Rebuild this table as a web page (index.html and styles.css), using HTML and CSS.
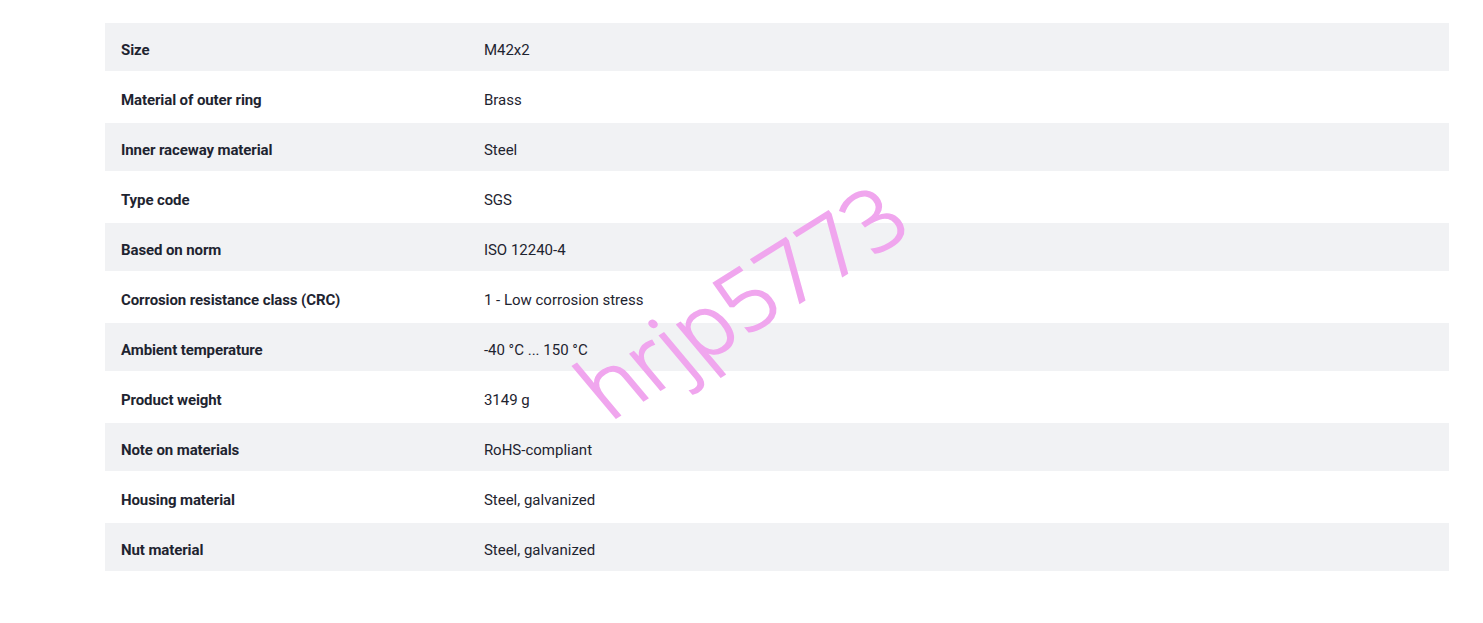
FILE: index.html
```html
<!doctype html>
<html lang="en">
<head>
  <meta charset="UTF-8">
  <title>Product details</title>
  <link rel="stylesheet" href="styles.css">
</head>
<body>
  <div class="page">
    <table class="specs">
      <tbody>
        <tr><th>Size</th><td>M42x2</td></tr>
        <tr><th>Material of outer ring</th><td>Brass</td></tr>
        <tr><th>Inner raceway material</th><td>Steel</td></tr>
        <tr><th>Type code</th><td>SGS</td></tr>
        <tr><th>Based on norm</th><td>ISO 12240-4</td></tr>
        <tr><th>Corrosion resistance class (CRC)</th><td>1 - Low corrosion stress</td></tr>
        <tr><th>Ambient temperature</th><td>-40 °C ... 150 °C</td></tr>
        <tr><th>Product weight</th><td>3149 g</td></tr>
        <tr><th>Note on materials</th><td>RoHS-compliant</td></tr>
        <tr><th>Housing material</th><td>Steel, galvanized</td></tr>
        <tr><th>Nut material</th><td>Steel, galvanized</td></tr>
      </tbody>
    </table>
    <div class="watermark">hrjp5773</div>
  </div>
</body>
</html>
```

FILE: styles.css
```css
body {
    margin: 0;
    background: #fff;
    font-family: Roboto, "Liberation Sans", sans-serif;
    color: #1e2430;
}

.page {
    position: relative;
    padding: 21px 34px 0 105px;
}

.specs {
    width: 100%;
    border-collapse: separate;
    border-spacing: 0 2px;
    font-size: 15px;
}

.specs th,
.specs td {
    height: 48px;
    padding: 5px 16px 0 16px;
    box-sizing: border-box;
    text-align: left;
    vertical-align: middle;
}

.specs th {
    width: 27%;
    font-weight: 700;
    letter-spacing: -0.1px;
}

.specs td {
    font-weight: 400;
}

.specs tr:nth-child(odd) th,
.specs tr:nth-child(odd) td {
    background: #f1f2f4;
}

.watermark {
    position: absolute;
    left: 560px;
    top: 256px;
    font-family: "Noto Sans", sans-serif;
    font-weight: 300;
    font-size: 88px;
    line-height: 1;
    color: #f0a6ee;
    -webkit-text-stroke: 1.5px #f0a6ee;
    transform: rotate(-32deg) skewX(8deg);
    pointer-events: none;
}
```
